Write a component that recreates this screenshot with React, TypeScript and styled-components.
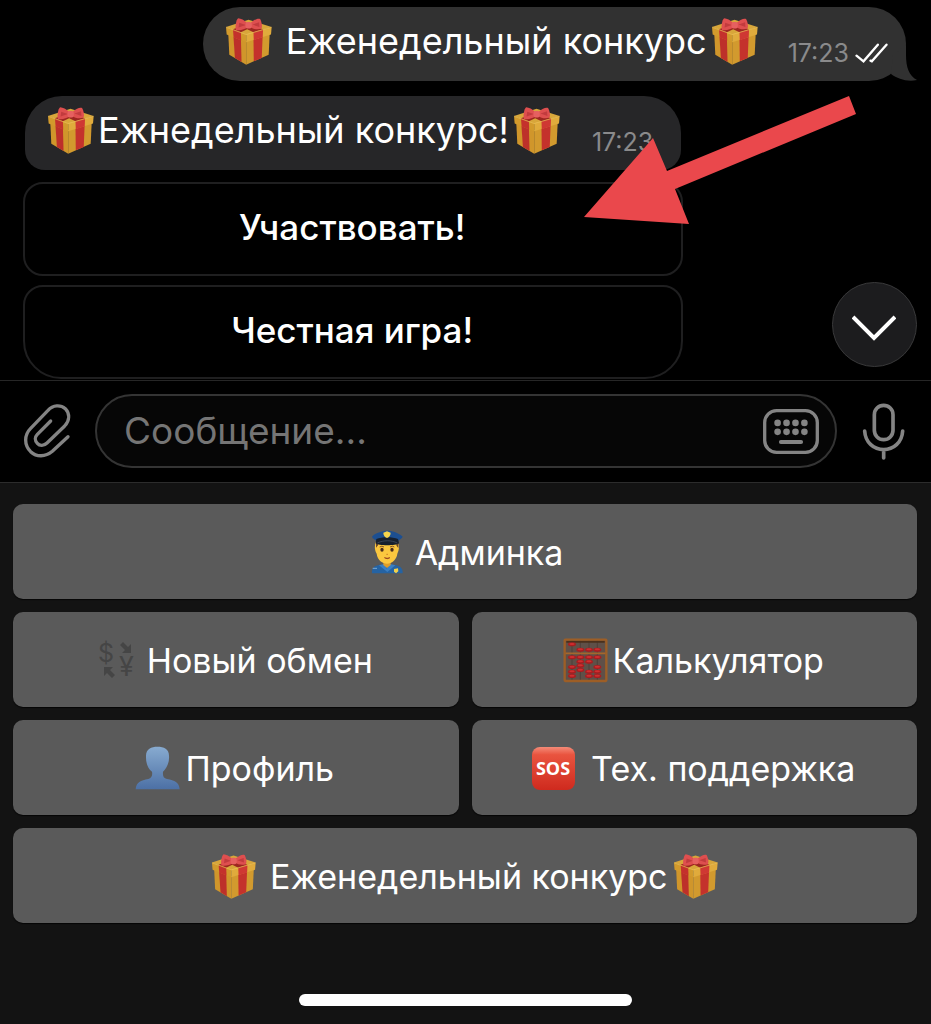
import React from 'react';
import styled, { createGlobalStyle } from 'styled-components';

const GlobalStyle = createGlobalStyle`
  *, *::before, *::after { box-sizing: border-box; }
  body {
    margin: 0;
    background: #000;
    color: #fff;
    font-family: Inter, "Liberation Sans", sans-serif;
  }
  button, input { font: inherit; color: inherit; }
`;

const Page = styled.div`
  display: flex;
  flex-direction: column;
  min-height: 100vh;
`;

const Chat = styled.main`
  position: relative;
  display: flex;
  flex-direction: column;
  padding: 7px 25px 1px 23px;
`;

const Bubble = styled.div<{ $own?: boolean }>`
  position: relative;
  display: flex;
  align-items: center;
  height: 74px;
  padding: 0 ${p => (p.$own ? 18 : 28)}px 6px 22px;
  border-radius: ${p => (p.$own ? '37px' : '37px 37px 20px 20px')};
  background: ${p => (p.$own ? '#313131' : '#262628')};
  align-self: ${p => (p.$own ? 'flex-end' : 'stretch')};
  margin: ${p => (p.$own ? '0 0 15px' : '0 2px 12px')};
`;

const MessageText = styled.span<{ $spaced?: boolean }>`
  font-size: 36px;
  line-height: 44px;
  white-space: nowrap;
  margin: 0 4px 0 ${p => (p.$spaced ? 14 : 4)}px;
`;

const Meta = styled.span`
  display: flex;
  align-items: center;
  gap: 6px;
  margin-left: auto;
  padding: 24px 0 0 30px;
  font-size: 25px;
  line-height: 30px;
  color: #8a8a8b;
`;

const Tail = styled.svg`
  position: absolute;
  right: -12px;
  bottom: 0;
`;

const Incoming = styled.section`
  display: flex;
  flex-direction: column;
  width: calc(75% - 2px);
`;

const InlineKeyboard = styled.div`
  display: grid;
  gap: 9px;
`;

const InlineButton = styled.button<{ $last?: boolean }>`
  height: 94px;
  padding: 0 2px 4px 0;
  border: 2px solid #1f1f20;
  border-radius: ${p => (p.$last ? '20px 20px 38px 38px' : '20px')};
  background: #000;
  font-size: 35px;
  font-weight: 500;
`;

const ScrollDown = styled.button`
  position: absolute;
  right: 14px;
  bottom: 13px;
  display: grid;
  place-items: center;
  width: 85px;
  height: 85px;
  padding: 6px 2px 0 0;
  border: 1px solid #39393a;
  border-radius: 50%;
  background: #1c1c1e;
`;

const Arrow = styled.svg`
  position: absolute;
  left: 584px;
  top: 96px;
  pointer-events: none;
`;

const Composer = styled.form`
  display: flex;
  align-items: center;
  gap: 24px;
  padding: 13px 25px 14px 23px;
  border-top: 1px solid #262626;
`;

const IconButton = styled.button`
  display: grid;
  place-items: center;
  flex: none;
  padding: 0;
  border: 0;
  background: none;
  color: #848484;
`;

const Field = styled.div`
  display: flex;
  flex: 1;
  align-items: center;
  height: 74px;
  padding: 0 15px 0 27px;
  border: 2px solid #343434;
  border-radius: 37px;
  background: #060606;
`;

const MessageInput = styled.input`
  flex: 1;
  min-width: 0;
  padding: 0;
  border: 0;
  outline: 0;
  background: none;
  font-size: 37px;
  line-height: 46px;
  &::placeholder { color: #757575; opacity: 1; }
`;

const Panel = styled.section`
  display: flex;
  flex: 1;
  flex-direction: column;
  padding: 21px 14px 18px 13px;
  border-top: 1px solid #2c2c2c;
  background: #131313;
`;

const Keys = styled.div`
  display: grid;
  grid-template-columns: 1fr 1fr;
  gap: 13px;
`;

const Key = styled.button<{ $wide?: boolean; $gap?: number }>`
  display: flex;
  align-items: center;
  justify-content: center;
  gap: ${p => p.$gap ?? 5}px;
  grid-column: ${p => (p.$wide ? '1 / -1' : 'auto')};
  height: 95px;
  padding: 2px 2px 0 0;
  border: 0;
  border-radius: 10px;
  background: #5a5a5a;
  box-shadow: 0 1px 1px #060606;
  font-size: 34px;
  white-space: nowrap;
`;

const HomeBar = styled.div`
  width: 333px;
  height: 12px;
  margin: auto auto 0;
  border-radius: 6px;
  background: #fff;
`;

const Gift = ({ size = 47 }: { size?: number }) => (
  <svg width={size} height={size} viewBox="103 52 142 142" aria-hidden="true">
    <path d="M113 100 L167 122 L167 193 L116 163Z" fill="#d0962b" />
    <path d="M167 122 L238 100 L235 163 L167 193Z" fill="#d29a2e" />
    <path d="M128 100 L151 110 L153 185 L133 173Z" fill="#bd302a" />
    <path d="M189 110 L217 100 L214 173 L190 183Z" fill="#c4322c" />
    <path d="M106 79 L174 57 L244 79 L167 103Z" fill="#d8a63a" />
    <path d="M106 79 L167 101 L167 125 L108 102Z" fill="#d29a2c" />
    <path d="M167 101 L244 79 L242 102 L167 125Z" fill="#e0ab3c" />
    <path d="M127 86 L151 95 L152 120 L129 111Z" fill="#c4312c" />
    <path d="M189 95 L218 86 L217 110 L190 119Z" fill="#cf3833" />
    <path d="M127 86 L170 70 L218 86 L189 95 L170 86 L151 95Z" fill="#9c2720" />
    <path d="M107 80 L167 102 L243 80" fill="none" stroke="#edc45c" strokeWidth="2" />
    <path d="M170 68 C161 58 151 54 143 53 C136 57 133 82 136 88 C149 91 162 86 171 81Z" fill="#de4f4f" />
    <path d="M181 66 C192 56 203 52 209 55 C213 61 217 78 213 84 C201 89 187 85 180 79Z" fill="#de4f4f" />
    <path d="M146 66 L166 73 L144 81Z M206 65 L186 72 L207 79Z" fill="#c23b3e" />
    <rect x="165" y="64" width="19" height="20" rx="6" fill="#e66060" />
  </svg>
);

const Officer = () => (
  <svg width="45" height="45" viewBox="47 92 135 135" aria-hidden="true">
    <path d="M68 222 C66 204 77 199 91 196 L135 196 C151 199 161 205 160 222Z" fill="#2563a3" />
    <path d="M89 198 L104 194 L112 208 L122 194 L138 198 L114 218Z" fill="#397fc4" />
    <path d="M102 185 H124 V197 L113 206 L102 197Z" fill="#df9d29" />
    <path d="M79 129 C74 146 78 157 82 163 C84 182 100 193 113 193 C127 193 142 181 144 163 C150 152 150 140 146 129Z" fill="#fbc73f" />
    <path d="M80 125 V145 L86 138 H140 L147 146 V124Z" fill="#6a4528" />
    <path d="M86 134 H141 V154 H86Z" fill="#fbc73f" />
    <path d="M68 112 C75 101 101 94 114 94 C131 94 151 102 160 112 C157 119 149 121 146 126 H81 C77 119 70 119 68 112Z" fill="#1d4f90" />
    <path d="M81 119 C98 112 129 112 146 119 L149 132 C141 140 86 140 79 132Z" fill="#17202d" />
    <path d="M84 131 C103 122 126 122 144 131" stroke="#4b5869" strokeWidth="2" fill="none" />
    <path d="M113 96 L124 100 Q124 112 113 116 Q102 112 102 100Z" fill="#f6d54c" />
    <ellipse cx="98" cy="151" rx="5" ry="6" fill="#4b2d1e" />
    <ellipse cx="128" cy="151" rx="5" ry="6" fill="#4b2d1e" />
    <path d="M91 143 Q98 138 104 143 M122 143 Q129 138 135 143" stroke="#8a541e" strokeWidth="3" fill="none" />
    <path d="M111 165 H116" stroke="#cf8128" strokeWidth="3" />
    <path d="M105 175 Q114 181 122 175" fill="#98421e" stroke="#98421e" strokeWidth="3" />
    <path d="M134 209 L146 207 L147 216 L140 222 L134 217Z" fill="#f2d14b" />
    <path d="M70 207 H83" stroke="#79a9d4" strokeWidth="3" />
  </svg>
);

const ExchangeIcon = styled.svg`
  overflow: visible;
`;

const Exchange = () => (
  <ExchangeIcon width="45" height="45" viewBox="0 0 45 45" aria-hidden="true" fill="#454545">
    <text x="1" y="24" fontSize="25" fontFamily="Inter, sans-serif">$</text>
    <text x="22" y="38" fontSize="27" fontFamily="Inter, sans-serif">¥</text>
    <path d="M26 4 L31 9 L34 6 V15 H25 L28 12 L23 7Z" />
    <path d="M7 29 H16 L13 32 L18 37 L15 40 L10 35 L7 38Z" />
  </ExchangeIcon>
);

const Profile = () => (
  <svg width="45" height="45" viewBox="165 378 135 135" aria-hidden="true">
    <defs>
      <linearGradient id="bust" x1="0" y1="0" x2="0" y2="1">
        <stop offset="0" stopColor="#88abd0" />
        <stop offset="1" stopColor="#4c70a5" />
      </linearGradient>
    </defs>
    <path
      d="M232 380 C252 380 267 387 267 407 C269 430 258 446 249 455 C248 468 250 474 261 477 C284 481 297 486 299 508 H167 C169 486 182 481 205 477 C215 474 218 467 216 455 C204 446 197 430 198 407 C198 387 214 380 232 380Z"
      fill="url(#bust)"
    />
  </svg>
);

const beadRows: [number, number[]][] = [
  [74, [155]],
  [90, [180, 206, 231]],
  [113, [155, 180, 206, 231]],
  [126, [180, 206]],
  [138, [180]],
  [142, [155, 231]],
  [151, [180]],
  [156, [155, 206, 231]],
  [169, [155, 206, 231]],
];

const Abacus = () => (
  <svg width="45" height="45" viewBox="128 55 135 135" aria-hidden="true">
    <rect x="133" y="60" width="125" height="124" fill="#5f5048" />
    <path d="M155 62V182 M180 62V182 M206 62V182 M231 62V182" stroke="#463a34" strokeWidth="2" />
    <path d="M138 66H253" stroke="#4a301d" strokeWidth="6" />
    {beadRows.map(([y, xs]) => xs.map(x => (
      <g key={`${x}-${y}`}>
        <ellipse cx={x} cy={y} rx="12" ry="6" fill="#a81d20" />
        <ellipse cx={x} cy={y - 1} rx="8" ry="3" fill="#cf2f2f" />
      </g>
    )))}
    <path d="M133 101H258" stroke="#a5662c" strokeWidth="5" />
    <rect x="133" y="60" width="125" height="124" rx="2" fill="none" stroke="#9d5e26" strokeWidth="7" />
  </svg>
);

const Sos = () => (
  <svg width="45" height="45" viewBox="0 0 45 45" aria-hidden="true">
    <defs>
      <linearGradient id="sos" x1="0" y1="0" x2="0" y2="1">
        <stop offset="0" stopColor="#f48b78" />
        <stop offset="0.18" stopColor="#e9543f" />
        <stop offset="1" stopColor="#cf2a1e" />
      </linearGradient>
    </defs>
    <rect x="1" y="1" width="43" height="43" rx="8" fill="url(#sos)" />
    <text x="22" y="29" textAnchor="middle" fontSize="18" fontWeight="700" fontFamily="Open Sans, sans-serif" fill="#fff">SOS</text>
  </svg>
);

const Checks = () => (
  <svg width="33" height="20" viewBox="496 128 98 60" fill="none" stroke="#fff" strokeWidth="7" strokeLinecap="round" aria-hidden="true">
    <path d="M500 166 L521 183 L564 133 M542 181 L546 183 L590 133" />
  </svg>
);

export default function App() {
  return (
    <Page>
      <GlobalStyle />
      <Chat>
        <Bubble $own>
          <Gift />
          <MessageText $spaced>Еженедельный конкурс</MessageText>
          <Gift />
          <Meta>17:23 <Checks /></Meta>
          <Tail width="29" height="36" viewBox="0 0 29 36" aria-hidden="true">
            <path d="M17 0 V10 C17 22 20 31 28 35 C18 37 9 34 2 29 L4 10Z" fill="#313131" />
          </Tail>
        </Bubble>
        <Incoming>
          <Bubble>
            <Gift />
            <MessageText>Ежнедельный конкурс!</MessageText>
            <Gift />
            <Meta>17:23</Meta>
          </Bubble>
          <InlineKeyboard>
            <InlineButton type="button">Участвовать!</InlineButton>
            <InlineButton type="button" $last>Честная игра!</InlineButton>
          </InlineKeyboard>
        </Incoming>
        <Arrow width="273" height="129" viewBox="584 96 273 129" aria-hidden="true">
          <path d="M584 217 L653 138 L667 171 L849 96 L856 114 L675 189 L689 224Z" fill="#ea484c" />
        </Arrow>
        <ScrollDown type="button" aria-label="Вниз">
          <svg width="44" height="26" viewBox="0 0 44 26" fill="none" stroke="#fff" strokeWidth="4" aria-hidden="true">
            <path d="M1 2 L22 23 L43 2" />
          </svg>
        </ScrollDown>
      </Chat>
      <Composer onSubmit={e => e.preventDefault()}>
        <IconButton type="button" aria-label="Прикрепить">
          <svg width="48" height="57" viewBox="71 398 144 171" fill="none" stroke="currentColor" strokeWidth="10" strokeLinecap="round" strokeLinejoin="round">
            <path d="M206 499 L159 543 C138 561 111 560 94 544 C74 524 74 494 94 474 L146 420 C161 403 184 403 198 415 C212 430 211 450 196 467 L143 518 C134 527 121 527 114 519 C106 511 106 500 114 492 L154 452" />
          </svg>
        </IconButton>
        <Field>
          <MessageInput aria-label="Сообщение" placeholder="Сообщение..." />
          <IconButton type="button" aria-label="Клавиатура">
            <svg width="58" height="47" viewBox="484 410 175 142" fill="none" stroke="currentColor" strokeWidth="10">
              <rect x="492" y="418" width="159" height="126" rx="36" />
              <g fill="currentColor" stroke="none">
                {[455, 482].map(y => [531, 558, 585, 612].map(x => <circle key={`${x}-${y}`} cx={x} cy={y} r="10" />))}
              </g>
              <path d="M541 513 H602" strokeWidth="12" strokeLinecap="round" />
            </svg>
          </IconButton>
        </Field>
        <IconButton type="button" aria-label="Голосовое сообщение">
          <svg width="45" height="59" viewBox="781 396 135 177" fill="none" stroke="currentColor" strokeWidth="11" strokeLinecap="round">
            <rect x="821" y="406" width="56" height="103" rx="28" />
            <path d="M792 483 C794 518 820 539 849 539 C878 539 904 518 906 483 M849 539 V564" />
          </svg>
        </IconButton>
      </Composer>
      <Panel>
        <Keys>
          <Key type="button" $wide><Officer />Админка</Key>
          <Key type="button"><Exchange />Новый обмен</Key>
          <Key type="button"><Abacus />Калькулятор</Key>
          <Key type="button"><Profile />Профиль</Key>
          <Key type="button" $gap={15}><Sos />Тех. поддержка</Key>
          <Key type="button" $wide>
            <Gift size={45} />
            <span>&nbsp;Еженедельный конкурс</span>
            <Gift size={45} />
          </Key>
        </Keys>
        <HomeBar />
      </Panel>
    </Page>
  );
}
